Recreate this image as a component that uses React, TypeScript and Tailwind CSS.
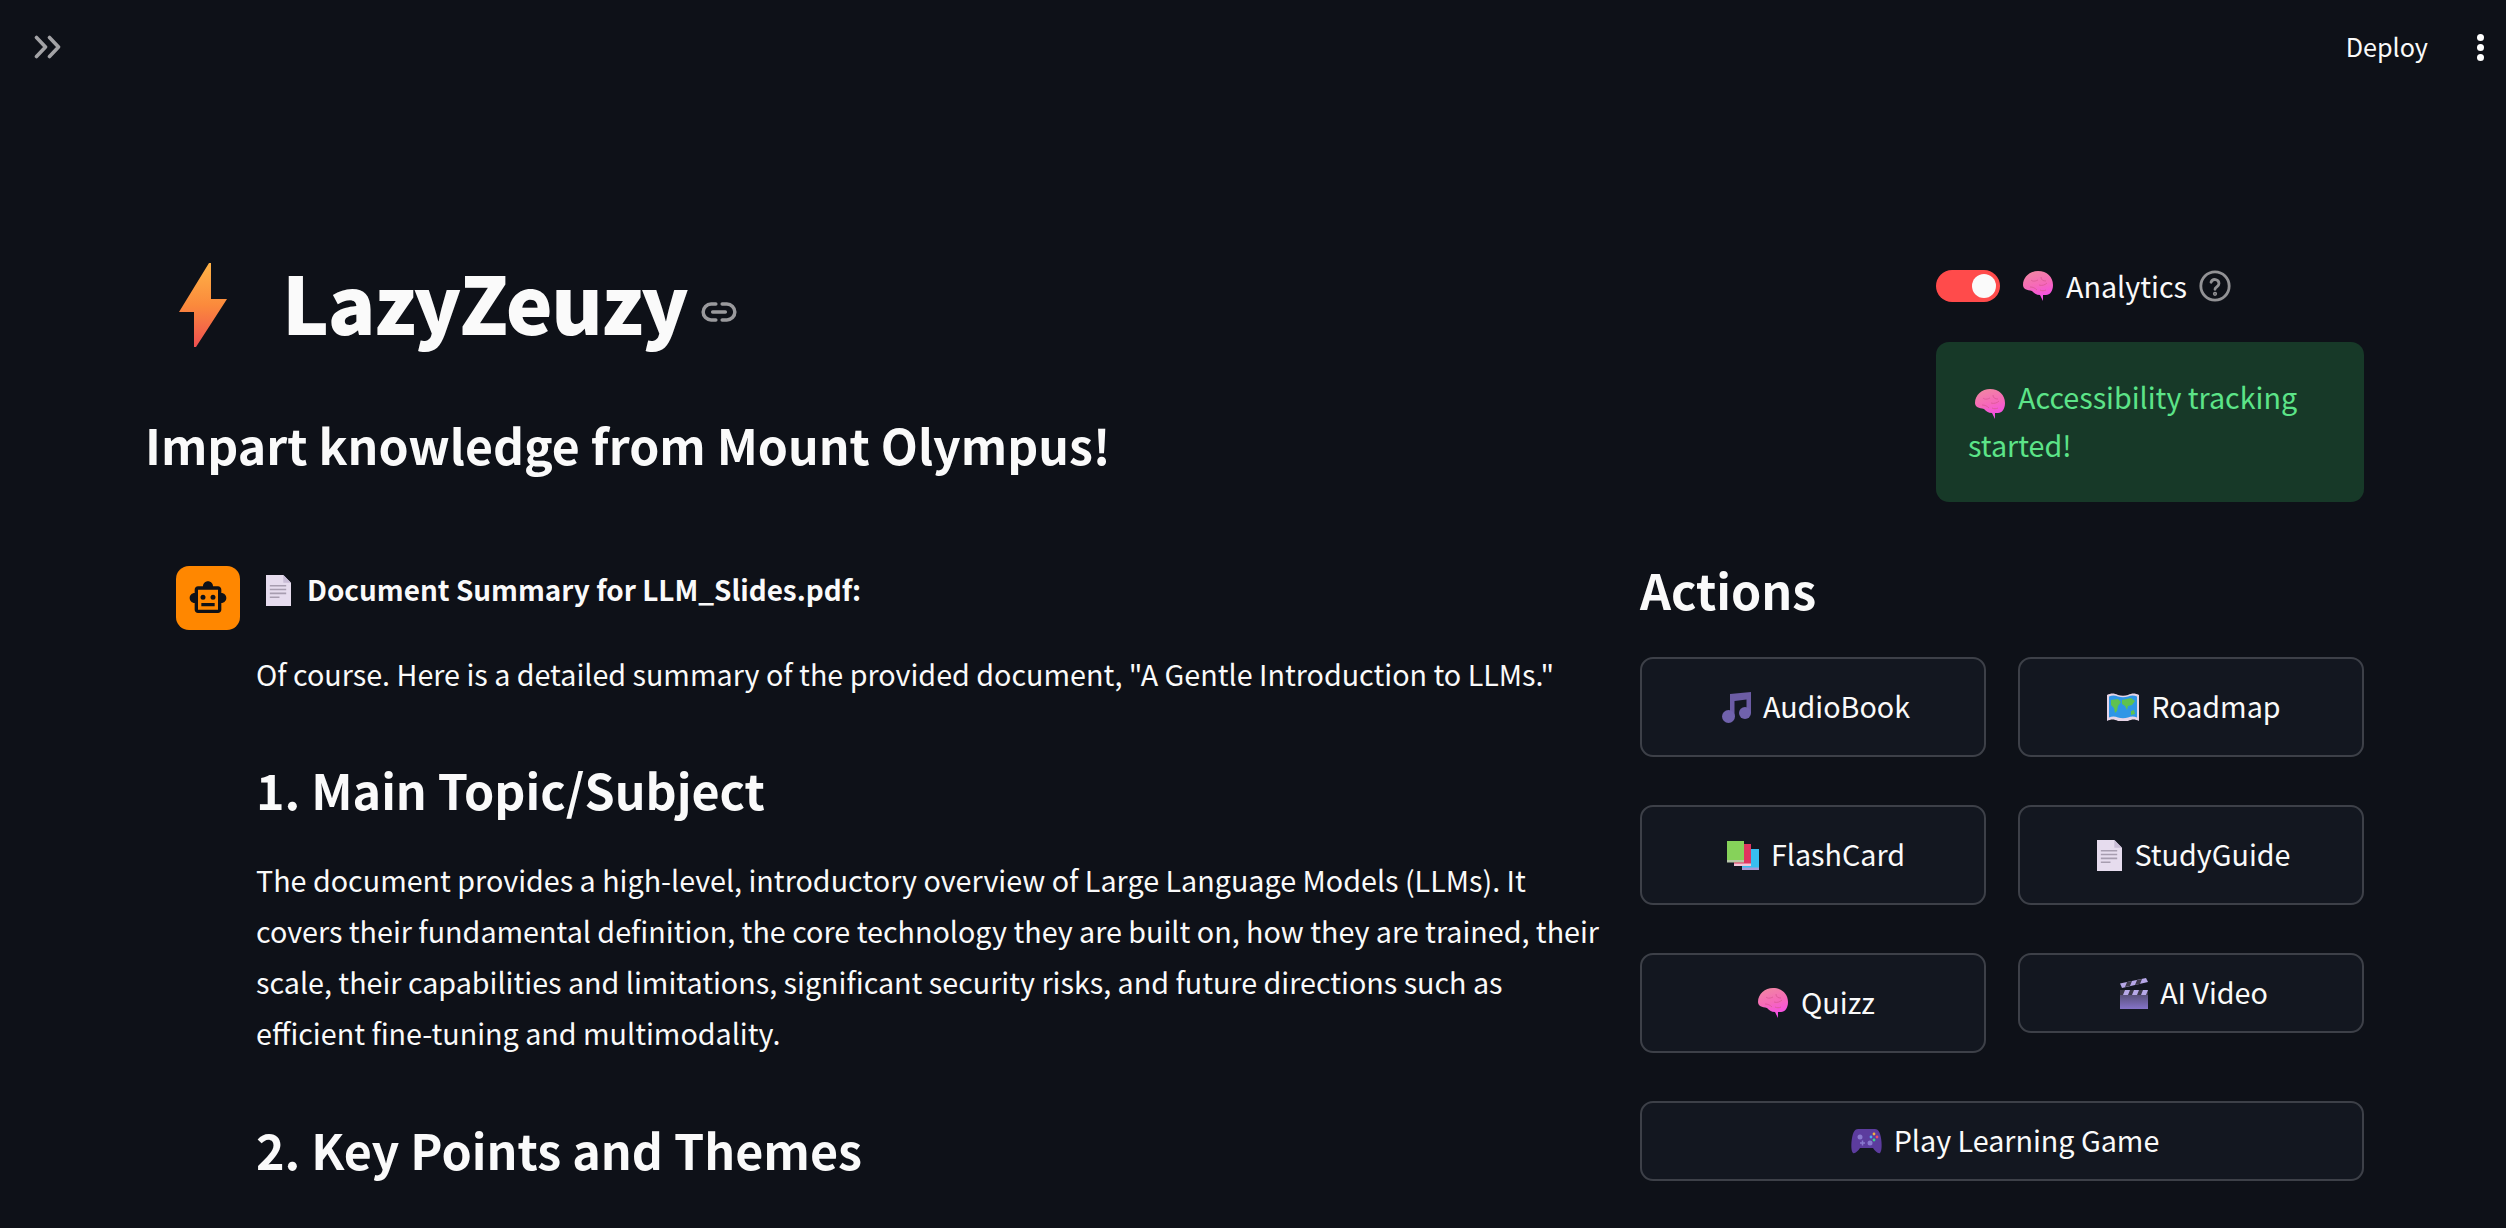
const sans = { fontFamily: '"Noto Sans CJK SC", "Noto Sans", sans-serif' }

function Brain({ className, id }: { className?: string; id: string }) {
  return (
    <svg viewBox="0 0 32 32" className={className}>
      <defs>
        <linearGradient id={id} x1="0" y1="0" x2="0.3" y2="1">
          <stop offset="0" stopColor="#f08aa0" />
          <stop offset="0.55" stopColor="#f66ab8" />
          <stop offset="1" stopColor="#f64fe6" />
        </linearGradient>
      </defs>
      <path d="M1 15C1 7 8 1 16 1c9 0 15 6 15 14 0 6-3 10-7 10h-3l0 6-3-6c-4 0-6-2-8-4-5-1-9-2-9-6z" fill={`url(#${id})`} />
      <path d="M9 10c2 2 5 1 7 0M19 7c0 3 2 4 5 4M8 17c3 0 5 1 7 3M17 15c3 1 6 0 8-2M18 20c2 1 4 1 6 0" stroke="#dc5a96" strokeWidth="0.9" fill="none" />
    </svg>
  )
}

function Music({ className }: { className?: string }) {
  return (
    <svg viewBox="0 0 29 31" className={className}>
      <path d="M8 2 29 0v21h-4.500V7.500L12.500 9v15.500H8z" fill="#6c5ca4" />
      <circle cx="6.500" cy="24.500" r="6.500" fill="#7062ac" />
      <circle cx="23" cy="21" r="6" fill="#7062ac" />
    </svg>
  )
}

function MapIcon({ className }: { className?: string }) {
  return (
    <svg viewBox="0 0 32 28" className={className}>
      <path d="M0 2c4-2 7-2 11 0 3 1 7 1 10 0 4-2 7-2 11 0v26c-4-2-7-2-11 0-3 1-7 1-10 0-4-2-7-2-11 0z" fill="#e6d4e6" />
      <path d="M2 3.500c3-1.500 6-1.500 9 0 3 1 7 1 10 0 3-1.500 6-1.500 9 0v21c-3-1.500-6-1.500-9 0-3 1-7 1-10 0-3-1.500-6-1.500-9 0z" fill="#2f96e6" />
      <path d="M4 7l7-1 3 3-3 4-1 5-2 2-1-5-3-3zM15 7l9-2 4 3-3 4-4 1-1 4-2-4-3-2zM24 18l3-1 1 4-4 1z" fill="#5fc24f" />
    </svg>
  )
}

function Books({ className }: { className?: string }) {
  return (
    <svg viewBox="0 0 32 29" className={className}>
      <path d="M15 8h17v21H15z" fill="#38bdf0" />
      <path d="M15 26.500h17V29H15z" fill="#a79ad6" />
      <path d="M7 3h17v22H7z" fill="#e0345f" />
      <path d="M7 22.500h17V25H7z" fill="#f2c6d8" />
      <path d="M0 0h17v21H0z" fill="#86d25a" />
      <path d="M0 19h17v2.500H0z" fill="#b8c8a8" />
    </svg>
  )
}

function Doc({ className }: { className?: string }) {
  return (
    <svg viewBox="0 0 26 32" className={className}>
      <path d="M0 0h18l8 8v24H0z" fill="#e6dcee" />
      <path d="M18 0l8 8h-8z" fill="#c9bdd6" />
      <path d="M4 11h17M4 15h17M4 19h17M4 23h10" stroke="#a79db0" strokeWidth="1.6" />
    </svg>
  )
}

function Clapper({ className }: { className?: string }) {
  return (
    <svg viewBox="0 0 28 31" className={className}>
      <defs>
        <linearGradient id="clapFill" x1="0" y1="0" x2="0" y2="1">
          <stop offset="0" stopColor="#4a4460" />
          <stop offset="1" stopColor="#8574c8" />
        </linearGradient>
      </defs>
      <path d="M0 12h28v19H0z" fill="url(#clapFill)" />
      <path d="M0 12h28v5H0z" fill="#3c3848" />
      <path d="M5 12h5l-2 5H3zM14 12h5l-2 5h-5zM23 12h5l-2 5h-5z" fill="#b7a8e8" />
      <path d="M0 5.500 26 0l2 4L2 10z" fill="#b7a8e8" />
      <path d="M7 4l5-1-2 5-5 1zM17 2l5-1-2 5-5 1z" fill="#3c3848" />
    </svg>
  )
}

function Gamepad({ className }: { className?: string }) {
  return (
    <svg viewBox="0 0 31 25" className={className}>
      <path d="M7 0h17c3 0 5 3 6 9 1 6 1 13-1 15-2 1-5-2-7-5H9c-2 3-5 6-7 5-2-2-2-9-1-15C2 3 4 0 7 0z" fill="#5c3c9e" />
      <circle cx="9" cy="8" r="2.500" fill="#8a7ad0" />
      <circle cx="19" cy="14" r="2.500" fill="#8a7ad0" />
      <path d="M9 14h5M11.500 11.500v5" stroke="#8a7ad0" strokeWidth="1.500" />
      <circle cx="23" cy="5" r="1.400" fill="#f0b040" />
      <circle cx="26" cy="8" r="1.400" fill="#f04a6a" />
      <circle cx="20" cy="8" r="1.400" fill="#4aa8f0" />
      <circle cx="23" cy="11" r="1.400" fill="#40d090" />
    </svg>
  )
}

function Bolt() {
  return (
    <svg viewBox="0 0 48 84" className="h-[84px] w-[48px] shrink-0">
      <defs>
        <linearGradient id="boltFill" x1="0" y1="0" x2="0" y2="1">
          <stop offset="0" stopColor="#ffb347" />
          <stop offset="0.5" stopColor="#fb8a3c" />
          <stop offset="1" stopColor="#ef4f50" />
        </linearGradient>
      </defs>
      <path d="M30 0h2v36h16L17 84h-2V49H0z" fill="url(#boltFill)" />
    </svg>
  )
}

function ActionButton({ icon, label, tall = true, wide }: { icon: React.ReactNode; label: string; tall?: boolean; wide?: boolean }) {
  return (
    <button className={`flex items-center justify-center gap-[12px] rounded-[13px] border-2 border-[#3d4048] bg-[#131720] pl-[6px] text-[28.7px] leading-none text-[#fafafa] ${tall ? 'h-[100px]' : 'h-[80px]'} ${wide ? 'col-span-2' : ''}`}>
      {icon}
      <span className="-translate-y-px">{label}</span>
    </button>
  )
}

export default function App() {
  return (
    <div className="relative h-[1228px] w-full overflow-hidden bg-[#0e1118] text-[#fafafa]" style={sans}>
      {/* top bar */}
      <div className="absolute inset-x-0 top-0 flex h-[94px] items-center justify-between pl-[34px] pr-[22px]">
        <svg viewBox="0 0 28 24" className="h-[24px] w-[28px]" fill="none" stroke="#a3a3a6" strokeWidth="3.6" strokeLinecap="round" strokeLinejoin="round">
          <path d="M2.500 2.500l9 9.500-9 9.500M15.500 2.500l9 9.500-9 9.500" />
        </svg>
        <div className="flex items-center gap-[49px]">
          <span className="text-[25.2px] leading-none">Deploy</span>
          <div className="flex flex-col gap-[3px]">
            <span className="size-[7px] rounded-full bg-white" />
            <span className="size-[7px] rounded-full bg-white" />
            <span className="size-[7px] rounded-full bg-white" />
          </div>
        </div>
      </div>

      <div className="flex flex-col pl-[145px] pr-[142px] pt-[260px]">
        {/* header row */}
        <div className="flex justify-between">
          <div>
            <div className="flex h-[90px] items-center pl-[34px]">
              <Bolt />
              <h1 className="-mt-[10px] ml-[55px] text-[79px] font-extrabold leading-none tracking-[-1.6px]">LazyZeuzy</h1>
              <svg viewBox="0 0 24 24" className="ml-[13px] mt-[14px] size-[38px]" fill="none" stroke="#9a9a9d" strokeWidth="2.200" strokeLinecap="round">
                <path d="M10 7H7a5 5 0 0 0 0 10h3M14 7h3a5 5 0 0 1 0 10h-3M8 12h8" />
              </svg>
            </div>
            <h2 className="mt-[59px] text-[48.2px] font-semibold leading-[70px]">Impart knowledge from Mount Olympus!</h2>
          </div>
          <div className="w-[428px] pt-[10px]">
            <div className="flex h-[32px] items-center">
              <div className="flex h-[32px] w-[64px] items-center justify-end rounded-full bg-[#ff4b4b] pr-[4px]">
                <span className="size-[24px] rounded-full bg-[#fafafa]" />
              </div>
              <Brain id="brainA" className="ml-[22px] size-[32px]" />
              <span className="ml-[12px] text-[28.7px] leading-none">Analytics</span>
              <svg viewBox="0 0 24 24" className="ml-[11px] size-[34px]" fill="none" stroke="#929295" strokeWidth="2" strokeLinecap="round">
                <circle cx="12" cy="12" r="10" />
                <path d="M9.200 9.300a2.900 2.900 0 0 1 5.600 1c0 2-2.800 2.400-2.800 4" />
                <circle cx="12" cy="17.500" r="0.500" fill="#929295" />
              </svg>
            </div>
            <div className="mt-[40px] h-[160px] rounded-[13px] bg-[#173928] px-[32px] pt-[31px] text-[28.7px] leading-[48px] text-[#5ce488]">
              <Brain id="brainB" className="mb-[-5px] ml-[6px] mr-[12px] inline-block size-[32px]" />
              Accessibility tracking started!
            </div>
          </div>
        </div>

        {/* content row */}
        <div className="mt-[64px] flex justify-between">
          <div className="flex w-[1458px] pl-[31px]">
            <div className="flex size-[64px] shrink-0 items-center justify-center rounded-[13px] bg-[#ff8700]">
              <svg viewBox="0 0 24 24" className="size-[40px]" fill="#0e1118">
                <path d="M20 9V7c0-1.100-.9-2-2-2h-3c0-1.660-1.340-3-3-3S9 3.340 9 5H6c-1.100 0-2 .9-2 2v2c-1.660 0-3 1.340-3 3s1.340 3 3 3v4c0 1.100.9 2 2 2h12c1.100 0 2-.9 2-2v-4c1.660 0 3-1.340 3-3s-1.340-3-3-3zm-2 10H6V7h12v12zm-9-6a1.500 1.500 0 1 1 0-3 1.500 1.500 0 0 1 0 3zm7.500-1.500a1.500 1.500 0 1 1-3 0 1.500 1.500 0 0 1 3 0zM8 15h8v2H8z" />
              </svg>
            </div>
            <div className="ml-[16px] min-w-0 flex-1">
              <div className="flex h-[48px] items-center">
                <Doc className="ml-[10px] h-[31px] w-[25px]" />
                <span className="ml-[16px] text-[27.9px] font-semibold leading-none">Document Summary for LLM_Slides.pdf:</span>
              </div>
              <p className="mt-[34px] text-[28.7px] leading-[51px]">Of course. Here is a detailed summary of the provided document, "A Gentle Introduction to LLMs."</p>
              <h3 className="mt-[55px] text-[48.4px] font-semibold leading-[70px]">1. Main Topic/Subject</h3>
              <p className="mt-[30px] text-[28.7px] leading-[51px]">The document provides a high-level, introductory overview of Large Language Models (LLMs). It covers their fundamental definition, the core technology they are built on, how they are trained, their scale, their capabilities and limitations, significant security risks, and future directions such as efficient fine-tuning and multimodality.</p>
              <h3 className="mt-[56px] text-[48.4px] font-semibold leading-[70px]">2. Key Points and Themes</h3>
            </div>
          </div>

          <div className="w-[724px]">
            <h2 className="h-[47px] text-[48.4px] font-semibold leading-[46px]">Actions</h2>
            <div className="mt-[44px] grid grid-cols-2 items-start gap-x-[32px] gap-y-[48px]">
              <ActionButton icon={<Music className="h-[31px] w-[29px]" />} label="AudioBook" />
              <ActionButton icon={<MapIcon className="h-[28px] w-[32px]" />} label="Roadmap" />
              <ActionButton icon={<Books className="h-[29px] w-[32px]" />} label="FlashCard" />
              <ActionButton icon={<Doc className="h-[31px] w-[25px]" />} label="StudyGuide" />
              <ActionButton icon={<Brain id="brainC" className="size-[32px]" />} label="Quizz" />
              <ActionButton icon={<Clapper className="h-[31px] w-[28px]" />} label="AI Video" tall={false} />
              <ActionButton icon={<Gamepad className="h-[25px] w-[31px]" />} label="Play Learning Game" tall={false} wide />
            </div>
          </div>
        </div>
      </div>
    </div>
  )
}
